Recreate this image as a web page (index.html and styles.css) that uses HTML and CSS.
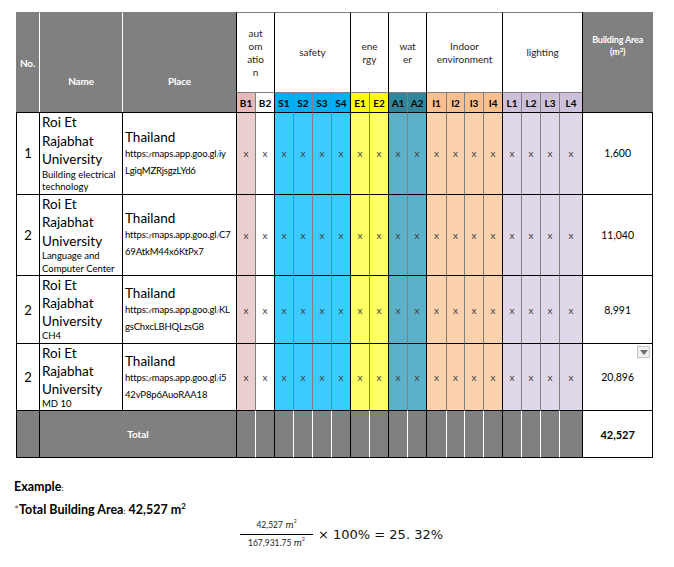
FILE: index.html
```html
<!DOCTYPE html>
<html>
<head>
<meta charset="utf-8">
<link rel="stylesheet" href="styles.css">
</head>
<body>
<table class="grid">
  <colgroup>
    <col class="c-no"><col class="c-name"><col class="c-place">
    <col class="c-sub"><col class="c-sub">
    <col class="c-sub"><col class="c-sub"><col class="c-sub"><col class="c-sub">
    <col class="c-sub"><col class="c-sub">
    <col class="c-sub"><col class="c-sub">
    <col class="c-i1"><col class="c-i2"><col class="c-sub"><col class="c-sub">
    <col class="c-sub"><col class="c-sub"><col class="c-sub"><col class="c-l4">
    <col class="c-area">
  </colgroup>
  <tr class="r-head">
    <th rowspan="2" class="hg h-no">No.</th>
    <th rowspan="2" class="hg h-name">Name</th>
    <th rowspan="2" class="hg h-place">Place</th>
    <th colspan="2" class="cat">aut<br>om<br>atio<br>n</th>
    <th colspan="4" class="cat">safety</th>
    <th colspan="2" class="cat">ene<br>rgy</th>
    <th colspan="2" class="cat">wat<br>er</th>
    <th colspan="4" class="cat">Indoor<br>environment</th>
    <th colspan="4" class="cat">lighting</th>
    <th rowspan="2" class="hg h-area">Building Area<br>(m<sup>2</sup>)</th>
  </tr>
  <tr class="r-sub">
    <th class="sb g hb">B1</th><th class="sb">B2</th>
    <th class="sb g hs">S1</th><th class="sb hs">S2</th><th class="sb hs">S3</th><th class="sb hs">S4</th>
    <th class="sb g he">E1</th><th class="sb he">E2</th>
    <th class="sb g ha">A1</th><th class="sb ha">A2</th>
    <th class="sb g hi">I1</th><th class="sb hi">I2</th><th class="sb hi">I3</th><th class="sb hi">I4</th>
    <th class="sb g hl">L1</th><th class="sb hl">L2</th><th class="sb hl">L3</th><th class="sb hl">L4</th>
  </tr>

  <tr class="r1">
    <td class="no">1</td>
    <td class="name"><div class="big">Roi Et<br>Rajabhat<br>University</div><div class="small">Building electrical<br>technology</div></td>
    <td class="place"><div class="country">Thailand</div><div class="url">https:<span class="sl">//</span>maps.app.goo.gl<span class="sl">/</span>iy<br>LgiqMZRjsgzLYd6</div></td>
    <td class="x g bb">x</td><td class="x">x</td>
    <td class="x g bs">x</td><td class="x bs">x</td><td class="x bs">x</td><td class="x bs">x</td>
    <td class="x g be">x</td><td class="x be">x</td>
    <td class="x g ba">x</td><td class="x ba">x</td>
    <td class="x g bi">x</td><td class="x bi">x</td><td class="x bi">x</td><td class="x bi">x</td>
    <td class="x g bl">x</td><td class="x bl">x</td><td class="x bl">x</td><td class="x bl">x</td>
    <td class="area">1,600</td>
  </tr>

  <tr class="r2">
    <td class="no">2</td>
    <td class="name"><div class="big">Roi Et<br>Rajabhat<br>University</div><div class="small">Language and<br>Computer Center</div></td>
    <td class="place"><div class="country">Thailand</div><div class="url">https:<span class="sl">//</span>maps.app.goo.gl<span class="sl">/</span>C7<br>69AtkM44x6KtPx7</div></td>
    <td class="x g bb">x</td><td class="x">x</td>
    <td class="x g bs">x</td><td class="x bs">x</td><td class="x bs">x</td><td class="x bs">x</td>
    <td class="x g be">x</td><td class="x be">x</td>
    <td class="x g ba">x</td><td class="x ba">x</td>
    <td class="x g bi">x</td><td class="x bi">x</td><td class="x bi">x</td><td class="x bi">x</td>
    <td class="x g bl">x</td><td class="x bl">x</td><td class="x bl">x</td><td class="x bl">x</td>
    <td class="area">11,040</td>
  </tr>

  <tr class="r3">
    <td class="no">2</td>
    <td class="name"><div class="big">Roi Et<br>Rajabhat<br>University</div><div class="small">CH4</div></td>
    <td class="place"><div class="country">Thailand</div><div class="url">https:<span class="sl">//</span>maps.app.goo.gl<span class="sl">/</span>KL<br>gsChxcLBHQLzsG8</div></td>
    <td class="x g bb">x</td><td class="x">x</td>
    <td class="x g bs">x</td><td class="x bs">x</td><td class="x bs">x</td><td class="x bs">x</td>
    <td class="x g be">x</td><td class="x be">x</td>
    <td class="x g ba">x</td><td class="x ba">x</td>
    <td class="x g bi">x</td><td class="x bi">x</td><td class="x bi">x</td><td class="x bi">x</td>
    <td class="x g bl">x</td><td class="x bl">x</td><td class="x bl">x</td><td class="x bl">x</td>
    <td class="area">8,991</td>
  </tr>

  <tr class="r4">
    <td class="no">2</td>
    <td class="name"><div class="big">Roi Et<br>Rajabhat<br>University</div><div class="small">MD 10</div></td>
    <td class="place"><div class="country">Thailand</div><div class="url">https:<span class="sl">//</span>maps.app.goo.gl<span class="sl">/</span>i5<br>42vP8p6AuoRAA18</div></td>
    <td class="x g bb">x</td><td class="x">x</td>
    <td class="x g bs">x</td><td class="x bs">x</td><td class="x bs">x</td><td class="x bs">x</td>
    <td class="x g be">x</td><td class="x be">x</td>
    <td class="x g ba">x</td><td class="x ba">x</td>
    <td class="x g bi">x</td><td class="x bi">x</td><td class="x bi">x</td><td class="x bi">x</td>
    <td class="x g bl">x</td><td class="x bl">x</td><td class="x bl">x</td><td class="x bl">x</td>
    <td class="area area-drop">20,896<span class="drop"><svg width="8" height="5" viewBox="0 0 8 5"><path d="M0 0H8L4 5Z" fill="#6d6d6d"/></svg></span></td>
  </tr>

  <tr class="r-total">
    <td class="no tg"></td>
    <td colspan="2" class="tg total-label">Total</td>
    <td class="tg g"></td><td class="tg w"></td>
    <td class="tg g"></td><td class="tg w"></td><td class="tg w"></td><td class="tg w"></td>
    <td class="tg g"></td><td class="tg w"></td>
    <td class="tg g"></td><td class="tg w"></td>
    <td class="tg g"></td><td class="tg w"></td><td class="tg w"></td><td class="tg w"></td>
    <td class="tg g"></td><td class="tg w"></td><td class="tg w"></td><td class="tg w"></td>
    <td class="area total-val">42,527</td>
  </tr>
</table>

<div class="notes">
  <div class="example">Example<span class="colon">:</span></div>
  <div class="totline"><span class="star">*</span>Total Building Area<span class="colon">:</span> 42,527 m<sup>2</sup></div>
  <div class="formula">
    <div class="frac">
      <div class="num">42,527 <i>m</i><sup>2</sup></div>
      <div class="den">167,931.75 <i>m</i><sup>2</sup></div>
    </div>
    <div class="rest">× 100% = 25. 32%</div>
  </div>
</div>
</body>
</html>
```

FILE: styles.css
```css
body {
  margin: 0;
  padding: 12px 0 0 16px;
  background: #fff;
  color: #000;
  font-family: Lato, "Open Sans", sans-serif;
}

.grid {
  border-collapse: separate;
  border-spacing: 0;
  table-layout: fixed;
  width: 637px;
}

.c-no { width: 23px; }
.c-name { width: 83px; }
.c-place { width: 114px; }
.c-sub { width: 19px; }
.c-i1 { width: 20px; }
.c-i2 { width: 18px; }
.c-l4 { width: 23px; }
.c-area { width: 71px; }

.grid th, .grid td {
  padding: 0;
  border-left: 1px solid #808080;
  border-top: 1px solid #808080;
  font-weight: normal;
  text-align: center;
  vertical-align: middle;
  overflow: hidden;
}

.grid .g { border-left-color: #000; }

.r-head { height: 80px; }
.r-sub { height: 20px; }
.r1 { height: 79px; }
.r2 { height: 81px; }
.r3 { height: 68px; }
.r4 { height: 67px; }
.r-total { height: 48px; }

/* grey header cells */
.grid .hg {
  background: #808080;
  color: #fff;
  font-weight: bold;
  font-size: 10px;
  letter-spacing: -0.2px;
}
.grid .h-no { border-left-color: #808080; text-align: left; padding-left: 3px; }
.grid .h-name, .grid .h-place { border-left-color: #fff; padding-top: 36px; }
.grid .h-area {
  border-left-color: #000;
  vertical-align: top;
  padding-top: 22px;
  font-size: 9px;
  line-height: 10px;
}
.h-area sup { font-size: 6px; vertical-align: 3px; }

/* category header cells */
.grid .cat {
  border-left-color: #000;
  font-size: 10px;
  line-height: 13px;
  color: #262626;
  background: #fff;
}

/* sub headers */
.grid .sb {
  font-size: 10px;
  font-weight: bold;
  color: #000;
}
.hb { background: #e6b8b7; }
.hs { background: #00b0f0; }
.he { background: #ffff00; }
.ha { background: #31869b; }
.hi { background: #fabf8f; }
.hl { background: #ccc0da; }

/* body */
.r1 td, .r2 td, .r3 td, .r4 td, .r-total td { border-top-color: #000; }
.grid .no {
  border-left-color: #000;
  font-size: 13px;
}
.grid .name {
  border-left-color: #000;
  text-align: left;
  padding-left: 2px;
  vertical-align: top;
}
.big { font-size: 13.5px; line-height: 18.5px; }
.small { font-size: 9.5px; line-height: 12.5px; }
.r3 .big, .r4 .big { line-height: 18px; }
.r3 .small, .r4 .small { line-height: 12px; }

.grid .place {
  border-left-color: #000;
  text-align: left;
  padding-left: 2px;
}
.country { font-size: 13.5px; line-height: 18px; }
.url { font-size: 9.5px; line-height: 16px; white-space: nowrap; letter-spacing: -0.15px; }
.sl { font-size: 6px; }

.grid .x {
  font-size: 10px;
  color: #404040;
}
.bb { background: #ebcfcf; }
.bs { background: #3ccbff; }
.be { background: #ffff66; }
.ba { background: #5cb0c7; }
.bi { background: #fcd1ad; }
.bl { background: #e0d8e8; }

.grid .area {
  border-left-color: #000;
  border-right: 1px solid #000;
  font-size: 10.5px;
  background: #fff;
}
.grid .h-area { border-right: 1px solid #808080; }

.area-drop { position: relative; }
.drop {
  position: absolute;
  top: 2px;
  right: 2px;
  width: 11px;
  height: 10px;
  background: #f0f0f0;
  border: 1px solid #c6c6c6;
  display: flex;
  align-items: center;
  justify-content: center;
}

/* total row */
.r-total td { border-bottom: 1px solid #000; }
.grid .tg { background: #808080; }
.grid .tg.w { border-left-color: #fff; }
.grid .total-label {
  border-left-color: #000;
  color: #fff;
  font-weight: bold;
  font-size: 10px;
}
.grid .total-val { font-weight: bold; font-size: 11px; }

/* notes */
.notes {
  margin-left: -2px;
  margin-top: 18px;
}
.example, .totline {
  font-weight: bold;
  font-size: 12.5px;
  line-height: 21px;
}
.colon { font-size: 8px; font-weight: normal; }
.star { color: #666; font-weight: normal; font-size: 12px; }
.totline sup { font-size: 8px; vertical-align: 5px; line-height: 0; }

.formula {
  display: flex;
  align-items: center;
  margin-left: 226px;
  margin-top: -3px;
}
.frac {
  display: flex;
  flex-direction: column;
  align-items: center;
  width: 73px;
  font-size: 8.5px;
  color: #222;
}
.num { padding-bottom: 2px; border-bottom: 1px solid #000; width: 100%; text-align: center; line-height: 13px; }
.den { padding-top: 2px; line-height: 13px; }
.frac i { font-family: "DejaVu Serif", serif; font-style: italic; font-size: 9px; }
.frac sup { font-size: 5px; vertical-align: 5px; line-height: 0; }
.rest {
  font-family: "DejaVu Sans", sans-serif;
  font-size: 13px;
  margin-left: 5px;
  color: #111;
}
```
